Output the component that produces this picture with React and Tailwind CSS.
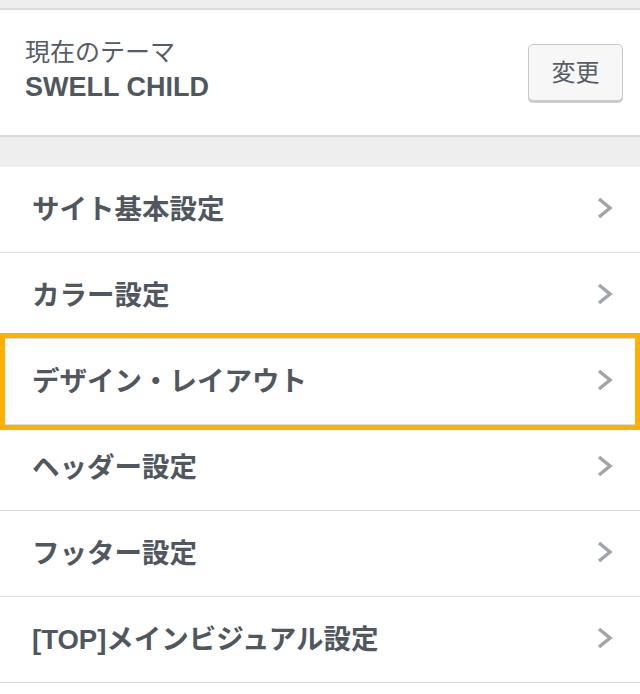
import React from 'react';

const Chevron = () => (
  <svg width="18" height="22" viewBox="0 0 18 22" className="mb-[4px] shrink-0">
    <path d="M3 2 L14 11 L3 20" fill="none" stroke="#a0a5aa" strokeWidth="3.5" />
  </svg>
);

const items = [
  'サイト基本設定',
  'カラー設定',
  'デザイン・レイアウト',
  'ヘッダー設定',
  'フッター設定',
  '[TOP]メインビジュアル設定',
];

const MenuRow = ({ label, active }) => (
  <div className="relative flex h-[86px] items-center justify-between border-b border-[#dcdcde] bg-white pl-[32px] pr-[26px]">
    <span className="text-[27.5px] font-bold text-[#50575e]">{label}</span>
    <Chevron />
    {active && (
      <div className="pointer-events-none absolute inset-x-0 -top-[6px] -bottom-[6px] z-10 border-[5px] border-[#ffb000]" />
    )}
  </div>
);

const App = () => {
  return (
    <div
      className="h-[694px] w-[640px] overflow-hidden bg-white"
      style={{ fontFamily: '"Liberation Sans", "Noto Sans CJK JP", sans-serif' }}
    >
      <div className="h-[10px] border-b-2 border-[#dcdcde] bg-[#eeeeee]" />
      <div className="flex h-[127px] items-center justify-between border-b-2 border-[#dcdcde] bg-white pl-[25px] pr-[17px]">
        <div className="flex flex-col pb-[4px]">
          <span className="text-[25px] leading-[32px] text-[#555d66]">現在のテーマ</span>
          <span className="text-[27px] font-bold leading-[38px] text-[#50575e]">SWELL CHILD</span>
        </div>
        <button className="h-[57px] w-[95px] rounded-[5px] border border-[#c8c8c8] bg-[#f7f7f7] text-[24px] text-[#555d66] shadow-[0_2px_0_#cccccc]">
          変更
        </button>
      </div>
      <div className="h-[30px] bg-[#eeeeee]" />
      <div className="flex flex-col">
        {items.map((label, i) => (
          <MenuRow key={label} label={label} active={i === 2} />
        ))}
      </div>
    </div>
  );
};

export default App;
